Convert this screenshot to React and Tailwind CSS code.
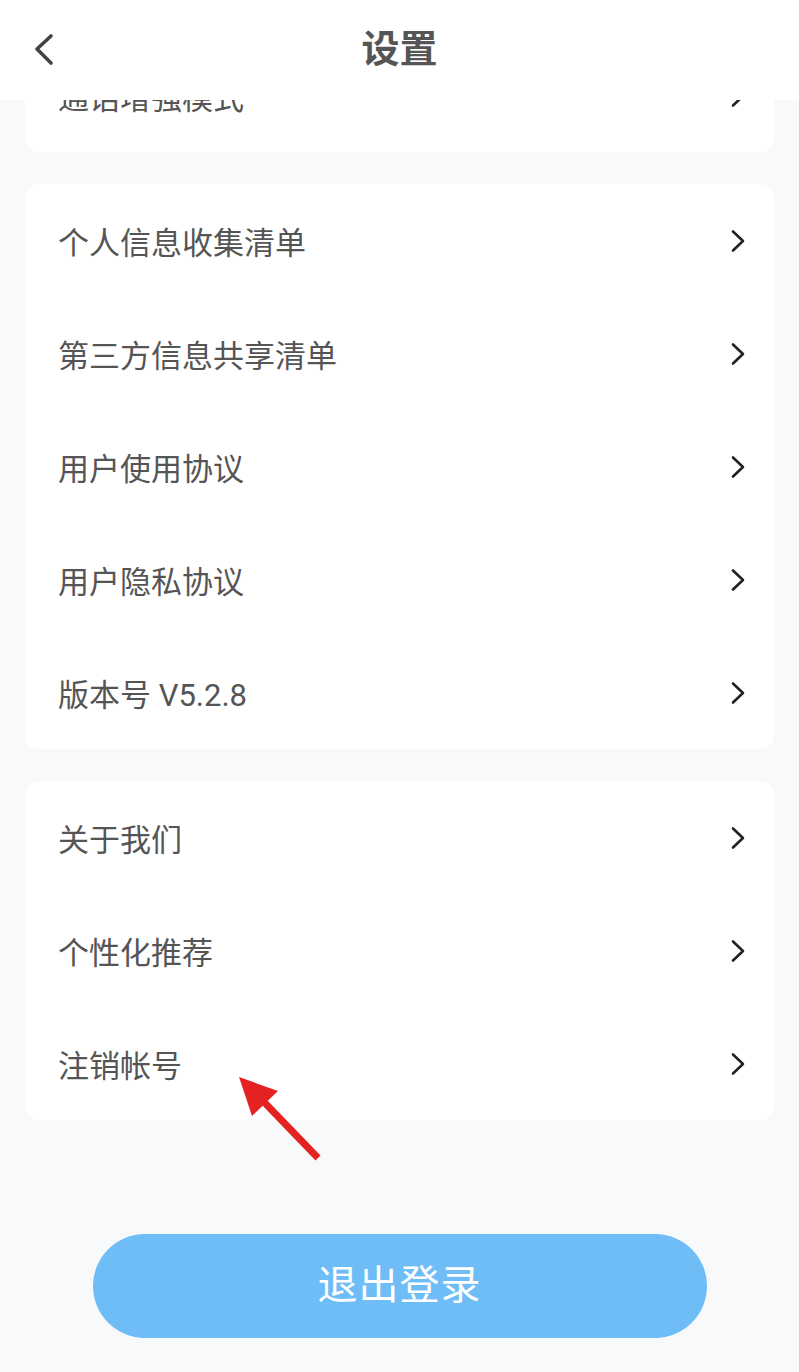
const groups = [
  ["个人信息收集清单", "第三方信息共享清单", "用户使用协议", "用户隐私协议", "版本号 V5.2.8"],
  ["关于我们", "个性化推荐", "注销帐号"],
];

function Row({ label }) {
  return (
    <div className="flex h-[113px] items-center justify-between pl-[33px] pr-[28px]">
      <span className="pt-[5px] text-[31px] leading-none text-[#555]">{label}</span>
      <svg width="16" height="24" viewBox="0 0 16 24" fill="none" className="text-[#222]">
        <path d="M3 2.5 L13 12 L3 21.5" stroke="currentColor" strokeWidth="2.6" strokeLinecap="round" strokeLinejoin="round" />
      </svg>
    </div>
  );
}

export default function App() {
  return (
    <div
      className="relative flex h-[1372px] w-full flex-col overflow-hidden bg-[#f8f9fb]"
      style={{ fontFamily: 'Roboto, "Noto Sans CJK SC", "Noto Sans", sans-serif' }}
    >
      <header className="relative z-10 grid h-[100px] shrink-0 grid-cols-[100px_1fr_100px] items-center bg-white pb-[2px]">
        <button className="flex h-full items-center pl-[32px] pt-[2px]">
          <svg width="24" height="36" viewBox="0 0 24 36" fill="none" className="text-[#444]">
            <path d="M19 4 L5 17 L19 31" stroke="currentColor" strokeWidth="3.6" strokeLinecap="round" strokeLinejoin="round" />
          </svg>
        </button>
        <h1 className="text-center text-[38px] font-bold leading-none text-[#555]">设置</h1>
        <div />
      </header>

      <main className="flex flex-1 flex-col gap-[32px] px-[25px]">
        <div className="-mt-[61px] rounded-[14px] bg-white">
          <Row label="通话增强模式" />
        </div>
        {groups.map((items, i) => (
          <div key={i} className="rounded-[14px] bg-white">
            {items.map((label) => (
              <Row key={label} label={label} />
            ))}
          </div>
        ))}

        <button className="mx-auto mt-[82px] flex h-[104px] w-[614px] items-center justify-center rounded-full bg-[#6ebdf7]">
          <span className="text-[40px] leading-none tracking-[1px] text-white">退出登录</span>
        </button>
      </main>

      <svg className="absolute left-[230px] top-[1070px]" width="100" height="100" viewBox="0 0 100 100">
        <line x1="33" y1="31" x2="88" y2="88" stroke="#e52222" strokeWidth="7" />
        <polygon points="9,7 48,21 22,46" fill="#e52222" />
      </svg>
    </div>
  );
}
